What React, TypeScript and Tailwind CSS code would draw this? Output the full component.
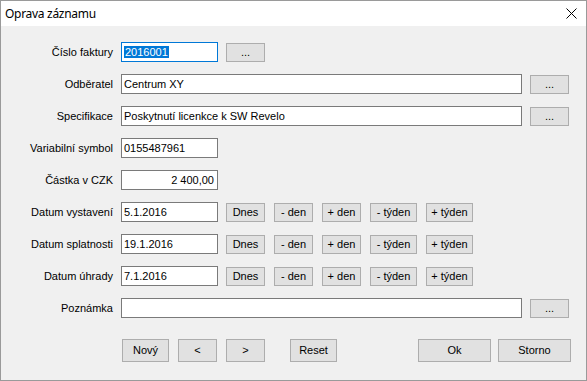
import React from "react";

type RowProps = {
  label: string;
  children: React.ReactNode;
};

function Row({ label, children }: RowProps) {
  return (
    <div className="flex h-[20px] items-start">
      <div className="w-[112px] text-right leading-[20px] whitespace-nowrap">{label}</div>
      <div className="ml-[8px] flex items-start">{children}</div>
    </div>
  );
}

function Field({
  width,
  right,
  focused,
  children,
}: {
  width: string;
  right?: boolean;
  focused?: boolean;
  children?: React.ReactNode;
}) {
  return (
    <div
      className={`${width} h-[20px] border bg-white leading-[18px] whitespace-nowrap ${
        focused ? "border-[#0078d7]" : "border-[#7a7a7a]"
      } ${right ? "pr-[3px] text-right" : "pl-[2px]"}`}
    >
      {children}
    </div>
  );
}

function Btn({ width, className = "", children }: { width: string; className?: string; children: React.ReactNode }) {
  return (
    <button
      className={`${width} mt-[1px] h-[19px] border border-[#adadad] bg-[#e1e1e1] leading-[17px] whitespace-nowrap ${className}`}
    >
      {children}
    </button>
  );
}

function DateRow({ label, value }: { label: string; value: string }) {
  return (
    <Row label={label}>
      <Field width="w-[97px]">{value}</Field>
      <Btn width="w-[39px]" className="ml-[8px]">Dnes</Btn>
      <Btn width="w-[39px]" className="ml-[9px]">- den</Btn>
      <Btn width="w-[39px]" className="ml-[9px]">+ den</Btn>
      <Btn width="w-[47px]" className="ml-[9px]">- týden</Btn>
      <Btn width="w-[47px]" className="ml-[9px]">+ týden</Btn>
    </Row>
  );
}

function BigBtn({ width, className = "", children }: { width: string; className?: string; children: React.ReactNode }) {
  return (
    <button
      className={`${width} h-[23px] border border-[#adadad] bg-[#e1e1e1] leading-[21px] ${className}`}
    >
      {children}
    </button>
  );
}

export default function App() {
  return (
    <div className="flex h-[381px] w-[587px] flex-col border border-[#9a9a9a] bg-[#f0f0f0] font-['Liberation_Sans',Arial,sans-serif] text-[11px] text-black">
      <div className="flex h-[25px] shrink-0 items-center justify-between bg-white pl-[4px] pr-[9px]">
        <span className="font-['Noto_Sans',sans-serif] text-[12px] tracking-[-0.3px]">Oprava záznamu</span>
        <svg width="11" height="11" viewBox="0 0 11 11" className="mb-[1px]">
          <path d="M0.5 0.5 L10.5 10.5 M10.5 0.5 L0.5 10.5" stroke="#000" strokeWidth="1" />
        </svg>
      </div>

      <div className="flex flex-col gap-[12px] pt-[16px]">
        <Row label="Číslo faktury">
          <Field width="w-[97px]" focused>
            <span className="bg-[#0078d7] px-[1px] text-white">2016001</span>
          </Field>
          <Btn width="w-[39px]" className="ml-[8px]">...</Btn>
        </Row>
        <Row label="Odběratel">
          <Field width="w-[401px]">Centrum XY</Field>
          <Btn width="w-[39px]" className="ml-[8px]">...</Btn>
        </Row>
        <Row label="Specifikace">
          <Field width="w-[401px]">Poskytnutí licenkce k SW Revelo</Field>
          <Btn width="w-[39px]" className="ml-[8px]">...</Btn>
        </Row>
        <Row label="Variabilní symbol">
          <Field width="w-[97px]">0155487961</Field>
        </Row>
        <Row label="Částka v CZK">
          <Field width="w-[97px]" right>
            2 400,00
          </Field>
        </Row>
        <DateRow label="Datum vystavení" value="5.1.2016" />
        <DateRow label="Datum splatnosti" value="19.1.2016" />
        <DateRow label="Datum úhrady" value="7.1.2016" />
        <Row label="Poznámka">
          <Field width="w-[401px]" />
          <Btn width="w-[39px]" className="ml-[8px]">...</Btn>
        </Row>
      </div>

      <div className="mt-[21px] flex pl-[121px]">
        <BigBtn width="w-[47px]">Nový</BigBtn>
        <BigBtn width="w-[39px]" className="ml-[9px]">&lt;</BigBtn>
        <BigBtn width="w-[39px]" className="ml-[9px]">&gt;</BigBtn>
        <BigBtn width="w-[47px]" className="ml-[25px]">Reset</BigBtn>
        <BigBtn width="w-[73px]" className="ml-[81px]">Ok</BigBtn>
        <BigBtn width="w-[73px]" className="ml-[7px]">Storno</BigBtn>
      </div>
    </div>
  );
}
